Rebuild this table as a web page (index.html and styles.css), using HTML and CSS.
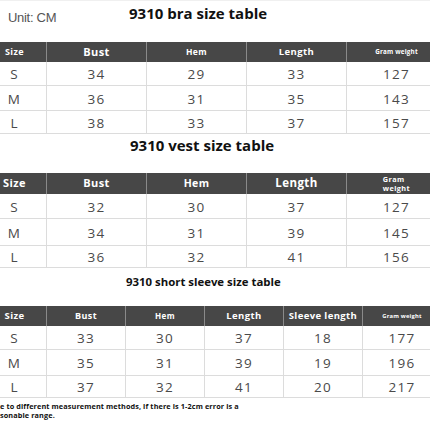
FILE: index.html
```html
<!DOCTYPE html>
<html>
<head>
<meta charset="utf-8">
<link rel="stylesheet" href="styles.css">
</head>
<body>
<div class="page">
  <div class="top">
    <div class="unit">Unit: CM</div>
    <div class="title t1title">9310 bra size table</div>
  </div>
  <div class="tbl tb1">
    <div class="h fs-size1">Size</div>
    <div class="h fs-bust1">Bust</div>
    <div class="h fs-hem1">Hem</div>
    <div class="h fs-len1">Length</div>
    <div class="h fs-gw1">Gram weight</div>
    <div class="c">S</div><div class="c">34</div><div class="c">29</div><div class="c">33</div><div class="c">127</div>
    <div class="c">M</div><div class="c">36</div><div class="c">31</div><div class="c">35</div><div class="c">143</div>
    <div class="c">L</div><div class="c">38</div><div class="c">33</div><div class="c">37</div><div class="c">157</div>
  </div>
  <div class="title t2title">9310 vest size table</div>
  <div class="tbl tb2">
    <div class="h fs-size2">Size</div>
    <div class="h fs-bust2">Bust</div>
    <div class="h fs-hem2">Hem</div>
    <div class="h fs-len2">Length</div>
    <div class="h fs-gw2">Gram<br>weight</div>
    <div class="c">S</div><div class="c">32</div><div class="c">30</div><div class="c">37</div><div class="c">127</div>
    <div class="c">M</div><div class="c">34</div><div class="c">31</div><div class="c">39</div><div class="c">145</div>
    <div class="c">L</div><div class="c">36</div><div class="c">32</div><div class="c">41</div><div class="c">156</div>
  </div>
  <div class="title t3title">9310 short sleeve size table</div>
  <div class="tbl tb3">
    <div class="h fs-size3">Size</div>
    <div class="h fs-bust3">Bust</div>
    <div class="h fs-hem3">Hem</div>
    <div class="h fs-len3">Length</div>
    <div class="h fs-sl3">Sleeve length</div>
    <div class="h fs-gw3">Gram weight</div>
    <div class="c">S</div><div class="c">33</div><div class="c">30</div><div class="c">37</div><div class="c">18</div><div class="c">177</div>
    <div class="c">M</div><div class="c">35</div><div class="c">31</div><div class="c">39</div><div class="c">19</div><div class="c">196</div>
    <div class="c">L</div><div class="c">37</div><div class="c">32</div><div class="c">41</div><div class="c">20</div><div class="c">217</div>
  </div>
  <div class="note">e to different measurement methods, if there is 1-2cm error is a<br>sonable range.</div>
</div>
</body>
</html>
```
FILE: styles.css
```css
html, body {
  margin: 0;
  padding: 0;
  background: #fff;
}
.page {
  width: 430px;
  height: 430px;
  overflow: hidden;
  font-family: "Open Sans", "DejaVu Sans", sans-serif;
  border-top: 1px solid #f0f0f0;
  box-sizing: border-box;
}
.top {
  display: flex;
  height: 41px;
}
.unit {
  font-family: "Liberation Sans", Arial, sans-serif;
  font-size: 13px;
  letter-spacing: -0.3px;
  color: #555;
  width: 129px;
  flex-shrink: 0;
  padding-left: 8px;
  padding-top: 9px;
  line-height: 16px;
  box-sizing: border-box;
}
.title {
  font-weight: 700;
  color: #111;
  white-space: nowrap;
}
.t1title {
  font-size: 15px;
  line-height: 20px;
  padding-top: 2px;
}
.t2title {
  font-size: 15px;
  line-height: 20px;
  height: 39px;
  padding-top: 1px;
  padding-left: 130px;
  box-sizing: border-box;
}
.t3title {
  font-size: 11.4px;
  line-height: 18px;
  height: 38px;
  padding-top: 5px;
  padding-left: 126px;
  box-sizing: border-box;
}
.tbl {
  display: grid;
  margin-left: -17px;
  width: max-content;
}
.tb1 {
  grid-template-columns: 64px 100px 100px 100px 100px;
  grid-template-rows: 20px 24px 25px 23px;
}
.tb2 {
  grid-template-columns: 64px 100px 100px 100px 100px;
  grid-template-rows: 21px 25px 27px 22px;
}
.tb3 {
  grid-template-columns: 64px 79px 79px 79px 79px 79px;
  grid-template-rows: 20px 24px 26px 22px;
}
.h {
  background: #474747;
  color: #fff;
  font-weight: 700;
  display: flex;
  align-items: center;
  justify-content: center;
  text-align: center;
  letter-spacing: 0.4px;
  border-right: 1px solid #8a8a8a;
  line-height: 1.1;
  white-space: nowrap;
}
.c {
  display: flex;
  align-items: center;
  justify-content: center;
  font-size: 13.5px;
  letter-spacing: 1.2px;
  color: #4a4a4a;
  border-right: 1px solid #dcdcdc;
  border-bottom: 1px solid #dcdcdc;
  padding-top: 1px;
  box-sizing: border-box;
}
.fs-size1 { font-size: 9px; }
.fs-bust1 { font-size: 11px; }
.fs-hem1 { font-size: 8.5px; }
.fs-len1 { font-size: 9.5px; }
.fs-gw1 { font-size: 6.3px; letter-spacing: 0.2px; }
.fs-size2 { font-size: 11px; }
.fs-bust2 { font-size: 11px; }
.fs-hem2 { font-size: 10.5px; }
.fs-len2 { font-size: 11.5px; }
.fs-gw2 { font-size: 7.3px; text-align: left; line-height: 9px; justify-content: center; }
.fs-size3 { font-size: 9.5px; }
.fs-bust3 { font-size: 9px; }
.fs-hem3 { font-size: 8px; }
.fs-len3 { font-size: 9.5px; }
.fs-sl3 { font-size: 9.5px; }
.fs-gw3 { font-size: 5.8px; letter-spacing: 0.2px; }
.note {
  font-size: 7.3px;
  font-weight: 700;
  color: #111;
  line-height: 9px;
  padding-top: 4px;
  letter-spacing: 0.1px;
  white-space: nowrap;
}
```
